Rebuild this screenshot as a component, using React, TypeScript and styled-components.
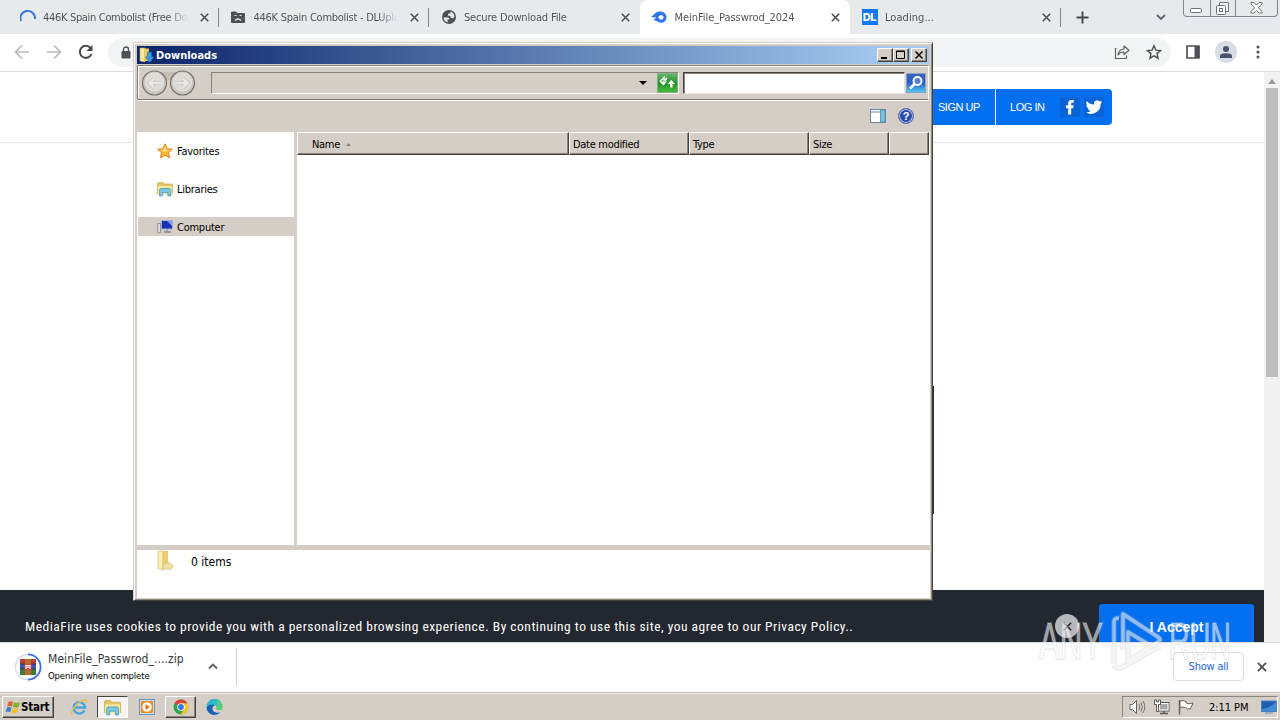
import React from "react";
import styled, { createGlobalStyle, css } from "styled-components";

const GlobalStyle = createGlobalStyle`
  * { box-sizing: border-box; }
  body { margin: 0; background: #fff; overflow: hidden; }
  svg { display: block; flex: none; }
`;

function Spinner() {
  return (
    <svg width="16" height="16" viewBox="0 0 16 16">
      <path d="M1 12A7.3 7.3 0 1 1 15 10" fill="none" stroke="#2f74d8" strokeWidth="1.9" />
    </svg>
  );
}

function SadFolder() {
  return (
    <svg width="16" height="16" viewBox="0 0 16 16">
      <path d="M1 3.5Q1 2.5 2 2.5H6L7.5 4H14Q15 4 15 5V13Q15 14 14 14H2Q1 14 1 13Z" fill="#4d5156" />
      <path d="M4.500 6.500h2M9.500 6.500h2M5 11.500Q8 8.500 11 11.500" fill="none" stroke="#e7eaed" strokeWidth="1.200" />
    </svg>
  );
}

function Globe() {
  return (
    <svg width="16" height="16" viewBox="0 0 16 16">
      <circle cx="8" cy="8" r="7" fill="#4d5156" />
      <path d="M2.500 8.500H6.500Q8.500 8.700 8.500 10.500H6.500V12.500L7.500 13.500Q3 13 2.500 8.500Z" fill="#e7eaed" />
      <path d="M9.500 2.500Q13 3.800 13.500 7.500L12 9.500 9.500 8.500V7L7 6.500V4.700L9.500 4.200Z" fill="#e7eaed" />
    </svg>
  );
}

function Flame() {
  return (
    <svg width="18" height="16" viewBox="0 0 18 16">
      <path d="M1 7.500C3.500 7.500 4.500 2.500 10 2.500C14 2.500 16.500 5 16.500 8.200C16.500 11.500 14 13.700 11 13.700C8 13.700 6.500 11.500 4.500 11.300L2.800 11.300C4.300 10.600 5.600 9.600 6 8Q3.800 9 1 7.500Z" fill="#2f74e8" />
      <path d="M8.200 8.300Q9.500 5.800 11.500 6Q13.800 6.500 13.600 8.500Q13.200 10.800 11 10.800Q9.200 10.600 8.200 8.300Z" fill="#fff" />
    </svg>
  );
}

function Cross({ size = 9, color = "#4c5054", width = 1.6 }: { size?: number; color?: string; width?: number }) {
  return (
    <svg width={size} height={size} viewBox="0 0 9 9">
      <path d="M.8.8 8.200 8.200M8.200.8.8 8.200" stroke={color} strokeWidth={width} />
    </svg>
  );
}

function LibraryFolder({ size = 16 }: { size?: number }) {
  return (
    <svg width={size} height={size} viewBox="0 0 16 16">
      <path d="M.5 3Q.5 1.500 2 1.500H6L7.500 3H14.500Q15.500 3 15.500 4V13H.5Z" fill="#e3c565" stroke="#c9a94b" strokeWidth=".7" />
      <path d="M1 5H15V13.500H1Z" fill="#f8e9a0" />
      <path d="M2.500 9Q2.500 7.500 4 7.500H12Q13.700 7.500 13.700 9V15H10.800V11.500H5.300V15H2.500Z" fill="#7cc8e4" stroke="#3f95bf" strokeWidth=".7" />
    </svg>
  );
}

function DlBadge() {
  return <DlIcon>DL</DlIcon>;
}

const tabs = [
  { title: "446K Spain Combolist (Free Download)", icon: <Spinner />, spacing: -0.32 },
  { title: "446K Spain Combolist - DLUpload", icon: <SadFolder />, spacing: -0.26 },
  { title: "Secure Download File", icon: <Globe />, spacing: -0.16 },
  { title: "MeinFile_Passwrod_2024", icon: <Flame />, active: true, spacing: -0.06 },
  { title: "Loading...", icon: <DlBadge />, spacing: 0.05 },
];

function App() {
  return (
    <Screen>
      <GlobalStyle />
      <TabStrip>
        {tabs.map((tab, i) => (
          <Tab key={i} $active={tab.active} $divider={i !== 2 && i !== 3}>
            <TabIcon>{tab.icon}</TabIcon>
            <TabTitle $spacing={tab.spacing}>{tab.title}</TabTitle>
            <Cross />
          </Tab>
        ))}
        <NewTab>
          <svg width="13" height="13" viewBox="0 0 13 13">
            <path d="M6.500.5V12.500M.5 6.500H12.500" stroke="#44484c" strokeWidth="1.900" />
          </svg>
        </NewTab>
        <svg width="10" height="7" viewBox="0 0 10 7">
          <path d="M1 1 5 5 9 1" fill="none" stroke="#5f6368" strokeWidth="1.800" />
        </svg>
        <Caption>
          <CaptionButton $width={26}>
            <svg width="13" height="6" viewBox="0 0 13 6">
              <rect x=".5" y=".5" width="11" height="4" rx="1" fill="#fff" stroke="#6d7278" />
            </svg>
          </CaptionButton>
          <CaptionButton $width={25}>
            <svg width="13" height="13" viewBox="0 0 13 13">
              <path d="M3.500 3V.5H12.500V9.500H10" fill="#f5f6f7" stroke="#6d7278" />
              <rect x=".5" y="3.500" width="9" height="9" rx="1" fill="#fff" stroke="#6d7278" />
              <rect x="3.500" y="6.500" width="3" height="3" fill="#fff" stroke="#6d7278" />
            </svg>
          </CaptionButton>
          <CaptionButton $width={42}>
            <svg width="13" height="12" viewBox="0 0 13 12">
              <path d="M1 .5H4L6.500 3 9 .5H12V2L8.500 5.800 12 9.500V11H9L6.500 8.500 4 11H1V9.500L4.500 5.800 1 2Z" fill="#fff" stroke="#6d7278" />
            </svg>
          </CaptionButton>
        </Caption>
      </TabStrip>

      <Toolbar>
        <svg width="16" height="16" viewBox="0 0 16 16">
          <path d="M15 8H2M8 1.500 1.500 8 8 14.500" fill="none" stroke="#b8babd" strokeWidth="1.700" />
        </svg>
        <svg width="16" height="16" viewBox="0 0 16 16">
          <path d="M1 8H14M8 1.500 14.500 8 8 14.500" fill="none" stroke="#b8babd" strokeWidth="1.700" />
        </svg>
        <svg width="16" height="16" viewBox="0 0 16 16">
          <path d="M13.500 10A6 6 0 1 1 12.500 4" fill="none" stroke="#46494d" strokeWidth="2" />
          <path d="M14.500 1V7H8.500Z" fill="#46494d" />
        </svg>
        <Omnibox>
          <svg width="10" height="13" viewBox="0 0 10 13">
            <path d="M2.500 6V3.500A2.500 2.500 0 0 1 7.500 3.500V6" fill="none" stroke="#4d5156" strokeWidth="1.400" />
            <rect x=".5" y="5" width="9" height="7.500" rx="1" fill="#4d5156" />
          </svg>
          <OmniboxActions>
            <svg width="16" height="16" viewBox="0 0 16 16">
              <path d="M2.500 4.500H1.500V14.500H12.500V11.500" fill="none" stroke="#5f6368" strokeWidth="1.200" />
              <path d="M4 11Q4.500 5.500 10 5V2L15 6.300 10 10.500V8Q6 7.800 4 11Z" fill="none" stroke="#5f6368" strokeWidth="1.200" strokeLinejoin="round" />
            </svg>
            <svg width="16" height="16" viewBox="0 0 16 16">
              <path d="M8 1.700 9.900 6.100 14.600 6.500 11 9.600 12.100 14.200 8 11.800 3.900 14.200 5 9.600 1.400 6.500 6.100 6.100Z" fill="none" stroke="#4d5156" strokeWidth="1.400" />
            </svg>
          </OmniboxActions>
        </Omnibox>
        <ToolbarActions>
          <svg width="14" height="14" viewBox="0 0 14 14">
            <path d="M1 1H13V13H1Z" fill="none" stroke="#4d5156" strokeWidth="1.700" />
            <path d="M8.500 1H13V13H8.500Z" fill="#4d5156" />
          </svg>
          <Avatar>
            <svg width="14" height="14" viewBox="0 0 14 14">
              <circle cx="7" cy="4" r="3" fill="#48536b" />
              <path d="M1 13V11Q1 8.300 7 8.300T13 11V13Z" fill="#48536b" />
            </svg>
          </Avatar>
          <svg width="4" height="14" viewBox="0 0 4 14">
            <circle cx="2" cy="2" r="1.500" fill="#4d5156" />
            <circle cx="2" cy="7" r="1.500" fill="#4d5156" />
            <circle cx="2" cy="12" r="1.500" fill="#4d5156" />
          </svg>
        </ToolbarActions>
      </Toolbar>

      <Viewport>
        <Page>
          <SiteHeader>
            <AccountBar>
              <SignUp>SIGN UP</SignUp>
              <LogIn>
                <span>LOG IN</span>
                <Social>
                  <svg width="20" height="20" viewBox="0 0 20 20">
                    <path d="M8.200 17.500V11.300H6V8.300H8.200V6.300Q8.200 3 11.500 3H13.700V5.800H12.300Q11.200 5.800 11.200 7V8.300H13.700L13.200 11.300H11.200V17.500Z" fill="#fff" />
                  </svg>
                </Social>
                <Social>
                  <svg width="20" height="20" viewBox="0 0 24 24">
                    <path d="M22 5.900c-.7.300-1.500.6-2.400.7.900-.5 1.500-1.300 1.800-2.300-.8.500-1.700.8-2.600 1a4.100 4.100 0 0 0-7 3.700A11.600 11.600 0 0 1 3.400 4.700a4.100 4.100 0 0 0 1.300 5.500c-.7 0-1.300-.2-1.900-.5a4.100 4.100 0 0 0 3.300 4.100c-.6.200-1.200.2-1.800.1a4.100 4.100 0 0 0 3.800 2.800A8.200 8.200 0 0 1 2 18.400 11.600 11.600 0 0 0 19.900 8c.8-.6 1.500-1.300 2.100-2.100Z" fill="#fff" />
                  </svg>
                </Social>
              </LogIn>
            </AccountBar>
          </SiteHeader>
          <PageBody>
            <DownloadPanel />
          </PageBody>
          <CookieBanner>
            <CookieText>
              MediaFire uses cookies to provide you with a personalized browsing experience. By continuing to use this site, you agree to our Privacy Policy..
            </CookieText>
            <DismissCookie>
              <Cross size={9} color="#23272f" width={1.5} />
            </DismissCookie>
            <Accept>I Accept</Accept>
          </CookieBanner>
        </Page>
        <Scrollbar>
          <svg width="8" height="5" viewBox="0 0 8 5">
            <path d="M0 5 4 0 8 5Z" fill="#9c9c9c" />
          </svg>
          <Thumb />
        </Scrollbar>
      </Viewport>

      <DownloadShelf>
        <DownloadItem>
          <svg width="28" height="28" viewBox="0 0 28 28">
            <circle cx="14" cy="14" r="12.600" fill="none" stroke="#d5dcf0" strokeWidth="1.500" />
            <path d="M14 1.400A12.600 12.600 0 0 1 14 26.600" fill="none" stroke="#3f6fe0" strokeWidth="1.800" />
            <rect x="6" y="6" width="16" height="5" fill="#b8403c" />
            <rect x="6" y="11" width="16" height="5" fill="#3b55a8" />
            <rect x="6" y="16" width="16" height="6" fill="#3c7d3c" />
            <path d="M6 11H22M6 16H22" stroke="#302c3a" strokeWidth=".8" />
            <rect x="11" y="6" width="6" height="16" fill="#b86a28" />
            <rect x="10.500" y="11" width="7" height="6" fill="#d8453a" />
            <path d="M12 16V12.500H16V16M14 12.500V15" fill="none" stroke="#fff" strokeWidth="1.200" />
          </svg>
          <DownloadText>
            <FileName>MeinFile_Passwrod_....zip</FileName>
            <FileStatus>Opening when complete</FileStatus>
          </DownloadText>
          <svg width="10" height="7" viewBox="0 0 10 7">
            <path d="M1 5.500 5 1.500 9 5.500" fill="none" stroke="#5f6368" strokeWidth="1.800" />
          </svg>
        </DownloadItem>
        <ShelfActions>
          <ShowAll>Show all</ShowAll>
          <Cross size={10} />
        </ShelfActions>
      </DownloadShelf>

      <Taskbar>
        <StartButton>
          <svg width="16" height="15" viewBox="0 0 16 15">
            <path d="M3.500 2Q6 .5 8 2L6.800 6.500Q4.500 5.300 2.200 6.500Z" fill="#e8602c" />
            <path d="M9 2.300Q12 3.800 15 2.300L13.700 7Q10.800 8.200 7.800 6.800Z" fill="#79b530" />
            <path d="M2 7.500Q4.500 6.300 6.500 7.500L5.300 12Q3 10.800.7 12Z" fill="#3b7fd4" />
            <path d="M7.500 7.900Q10.500 9.300 13.400 8L12.100 12.700Q9 14 6.200 12.500Z" fill="#f3be2c" />
          </svg>
          Start
        </StartButton>
        <TaskButtons>
          <TaskButton>
            <svg width="18" height="18" viewBox="0 0 18 18">
              <path d="M14.500 12.200A5.700 5.700 0 1 1 15 9.500H5" fill="none" stroke="#48a7e0" strokeWidth="2.400" />
              <path d="M3.500 15.800Q-.5 16.500 3.500 10.500Q8.500 3.500 14 1.800Q17.500 1.300 16 5" fill="none" stroke="#e8bd48" strokeWidth="1.300" />
            </svg>
          </TaskButton>
          <TaskButton $state="pressed">
            <LibraryFolder size={17} />
          </TaskButton>
          <TaskButton>
            <svg width="16" height="16" viewBox="0 0 16 16">
              <rect x=".5" y=".5" width="15" height="15" fill="#c7dcec" stroke="#6e98bc" />
              <rect x="2" y="2" width="12" height="12" rx="1" fill="#f08a1c" />
              <circle cx="8" cy="8" r="4.800" fill="#fff" />
              <path d="M6.500 5 11 8 6.500 11Z" fill="#e9730b" />
            </svg>
          </TaskButton>
          <TaskButton $state="raised">
            <svg width="16" height="16" viewBox="0 0 16 16">
              <circle cx="8" cy="8" r="7.500" fill="#2da44e" />
              <path d="M8 8 1.500 4.200A7.500 7.500 0 0 1 14.500 4.250Z" fill="#dd4437" />
              <path d="M8 4.250H14.500A7.500 7.500 0 0 1 7.500 15.500L11.200 9.800Z" fill="#f7c928" />
              <circle cx="8" cy="8" r="3.800" fill="#fff" />
              <circle cx="8" cy="8" r="2.900" fill="#3b78e7" />
            </svg>
          </TaskButton>
          <TaskButton>
            <svg width="17" height="17" viewBox="0 0 17 17">
              <path d="M.5 8A8 8 0 0 1 16.500 7.500Q16.500 11 12.500 11Q10 11 10.500 9.500Q11.300 7.500 8.800 6.300Q4 4.500.5 8Z" fill="#2fb8c8" />
              <path d="M10 1Q16.500 3 16.500 7.500Q16.500 11 12.500 11Q10 11 10.500 9.500Q12 5 10 1Z" fill="#54cf78" />
              <path d="M.5 8Q4 4.300 8.800 6.300Q5.500 8 6.700 11.300Q8.500 14.800 14.500 13.200A8 8 0 0 1 .5 8Z" fill="#1a62b5" />
            </svg>
          </TaskButton>
        </TaskButtons>
        <Tray>
          <svg width="17" height="16" viewBox="0 0 17 16">
            <path d="M1 5.500H3.500L7.500 1.500V14.500L3.500 10.500H1Z" fill="#fff" stroke="#66625c" />
            <path d="M10 5Q11.500 8 10 11M12 3.500Q14.500 8 12 12.500M14 2Q17.500 8 14 14" fill="none" stroke="#77736d" />
          </svg>
          <svg width="16" height="16" viewBox="0 0 16 16">
            <rect x="4.500" y="3.500" width="10.500" height="8.500" fill="#aaa8a4" stroke="#5c5954" />
            <rect x="5.500" y="4.500" width="8.500" height="6.500" fill="none" stroke="#fff" />
            <path d="M6 14.500H14M10 12V14" stroke="#5c5954" strokeWidth="1.500" />
            <path d="M.5 1V5.500H2.500V12.500H4.500V5.500H6.500V1H4.500V3H2.500V1Z" fill="#fff" stroke="#5c5954" />
          </svg>
          <svg width="16" height="16" viewBox="0 0 16 16">
            <path d="M1.500 1V15.500" stroke="#66625c" strokeWidth="1.500" />
            <path d="M2 2Q5 1 8 2.500V4Q11 5.500 15 4Q14 7 12 10Q9 10.500 7.500 8.500Q5 7.500 2 8.500Z" fill="#fff" stroke="#66625c" />
          </svg>
          <Clock>2:11 PM</Clock>
          <svg width="16" height="14" viewBox="0 0 16 14">
            <rect x=".5" y="1" width="15" height="10.500" fill="#1d5fae" stroke="#4c80b8" />
            <path d="M1 9Q8 8.500 15 2V11H1Z" fill="#3f8bd2" />
            <path d="M4 13H12" stroke="#8aa3b8" strokeWidth="1.500" />
          </svg>
        </Tray>
      </Taskbar>

      <Explorer>
        <TitleBar>
          <svg width="16" height="16" viewBox="0 0 16 16">
            <path d="M2 1H7V15L2 14Z" fill="#f9e9a0" stroke="#cfae52" strokeWidth=".6" />
            <path d="M6 1.500H11V14H6Z" fill="#ecc95c" />
            <path d="M9.500 5H13.500V10H16L11.500 15.500 7.500 10H9.500Z" fill="#369fe8" stroke="#1767b0" strokeWidth=".6" />
          </svg>
          <WindowTitle>Downloads</WindowTitle>
          <ClassicButton>
            <svg width="8" height="8" viewBox="0 0 8 8"><path d="M0 7H6" stroke="#000" strokeWidth="2" /></svg>
          </ClassicButton>
          <ClassicButton>
            <svg width="9" height="9" viewBox="0 0 9 9"><path d="M.5 1H8.500V8.500H.5ZM0 1.500H9" fill="none" stroke="#000" /></svg>
          </ClassicButton>
          <ClassicButton $gap>
            <svg width="8" height="8" viewBox="0 0 8 8"><path d="M.5.5 7.500 7.500M7.500.5.5 7.500" stroke="#000" strokeWidth="1.500" /></svg>
          </ClassicButton>
        </TitleBar>
        <NavBar>
          <svg width="56" height="26" viewBox="0 0 56 26">
            <path d="M12 2H43V10H12Z" fill="#c3beb6" />
            {[13.5, 41.5].map((cx) => (
              <g key={cx}>
                <circle cx={cx} cy="13" r="12" fill="#c8c5bf" stroke="#77746f" strokeWidth="1.200" />
                <circle cx={cx} cy="12" r="9.800" fill="#dedcd8" />
              </g>
            ))}
            <path d="M20 13H9M13 8.500 8.500 13 13 17.500M35 13H46M42 8.500 46.500 13 42 17.500" fill="none" stroke="#c6c4c0" strokeWidth="4" />
            <path d="M20 13H9M13 8.500 8.500 13 13 17.500M35 13H46M42 8.500 46.500 13 42 17.500" fill="none" stroke="#e9e8e5" strokeWidth="2.500" />
          </svg>
          <AddressBar>
            <svg width="8" height="4" viewBox="0 0 8 4"><path d="M0 0H8L4 4Z" fill="#000" /></svg>
            <Refresh>
              <svg width="17" height="15" viewBox="0 0 17 15">
                <path d="M1 6.500 5 2.500V5H6.500Q7.500 4.500 7.500 2.500" fill="none" stroke="#fff" strokeWidth="1.500" />
                <path d="M.5 6.500H8L4.300 10.500Z" fill="#fff" />
                <path d="M8.500 9 12.300 5 16 9H13.500V12.500H11V9Z" fill="#fff" />
              </svg>
            </Refresh>
          </AddressBar>
          <SearchBox />
          <SearchButton>
            <svg width="16" height="16" viewBox="0 0 16 16">
              <circle cx="9.500" cy="6" r="4" fill="#4f83d8" stroke="#fff" strokeWidth="2" />
              <path d="M6.500 9 2 13.500" stroke="#fff" strokeWidth="2.500" />
            </svg>
          </SearchButton>
        </NavBar>
        <CommandBar>
          <svg width="16" height="14" viewBox="0 0 16 14">
            <rect x=".5" y=".5" width="15" height="13" fill="#fff" stroke="#668aa8" />
            <path d="M1 3H10" stroke="#668aa8" />
            <rect x="10.500" y="1" width="4.500" height="12" fill="#79c3e0" stroke="#4f8cab" strokeWidth=".8" />
          </svg>
          <Help>?</Help>
        </CommandBar>
        <Panes>
          <Sidebar>
            <NavItem>
              <svg width="16" height="16" viewBox="0 0 16 16">
                <path d="M8 .8 10.200 5.700 15.500 6.200 11.500 9.700 12.700 15 8 12.200 3.300 15 4.500 9.700.5 6.200 5.800 5.700Z" fill="#fbb836" stroke="#dc7f23" strokeWidth=".9" />
                <path d="M8 3 9.300 6.700 12.500 7 8 9 3.500 7 6.700 6.700Z" fill="#fde08a" />
              </svg>
              <span>Favorites</span>
            </NavItem>
            <NavItem>
              <LibraryFolder />
              <span>Libraries</span>
            </NavItem>
            <NavItem $selected>
              <svg width="16" height="16" viewBox="0 0 16 16">
                <rect x=".8" y="4.500" width="2.700" height="9" fill="#dedede" stroke="#888" strokeWidth=".8" />
                <rect x="4.500" y="1.500" width="11" height="8.500" fill="#1731b8" stroke="#a6b2c8" />
                <path d="M10 2H15V7Z" fill="#7f9eea" />
                <path d="M7 13H14M10 10.500V12.500" stroke="#8f9aa8" strokeWidth="1.800" />
              </svg>
              <span>Computer</span>
            </NavItem>
          </Sidebar>
          <FileList>
            <ColumnRow>
              <Column $width={272} $first>
                Name
                <svg width="5" height="3" viewBox="0 0 5 3"><path d="M0 3 2.500 0 5 3Z" fill="#8b867d" /></svg>
              </Column>
              <Column $width={120}>Date modified</Column>
              <Column $width={120}>Type</Column>
              <Column $width={80}>Size</Column>
              <Column $width={40} />
            </ColumnRow>
          </FileList>
        </Panes>
        <Details>
          <svg width="18" height="21" viewBox="0 -1 18 21">
            <path d="M2 0H7V19L2 17.500Z" fill="#fbeeb2" stroke="#dcc475" strokeWidth=".7" />
            <path d="M6.500 0H12V14L6.500 19Z" fill="#e8cc70" />
            <path d="M12 11Q16 12.500 17.500 15.500L14 19Q12 17 7 18.500V14Z" fill="#efdf9f" stroke="#ccb978" strokeWidth=".6" />
          </svg>
          <ItemCount>0 items</ItemCount>
        </Details>
      </Explorer>

      <Watermark width="200" height="66" viewBox="0 0 200 66">
        <Letters $under>
          <text x="3" y="51" fontSize="52" textLength="64" lengthAdjust="spacingAndGlyphs">ANY</text>
          <text x="133" y="51" fontSize="52" textLength="62" lengthAdjust="spacingAndGlyphs">RUN</text>
        </Letters>
        <Play $under d="M83 10Q78 10 78 14V56M87 42V6L122 29Q126 32 122 34L92 53V24L112 36M78 57Q80 61 85 60L124 38" />
        <Play d="M83 10Q78 10 78 14V56M87 42V6L122 29Q126 32 122 34L92 53V24L112 36M78 57Q80 61 85 60L124 38" />
      </Watermark>
    </Screen>
  );
}

export default App;

const ui = `"DejaVu Sans Condensed", "DejaVu Sans", sans-serif`;
const face = "#d5cec6";

const raised = css`
  border: 1px solid;
  border-color: #fff #45423e #45423e #fff;
  box-shadow: inset -1px -1px #88837b;
`;

const Screen = styled.div`
  position: relative;
  display: flex;
  flex-direction: column;
  width: 1280px;
  height: 720px;
  overflow: hidden;
  font-family: ${ui};
  font-stretch: condensed;
  font-size: 11px;
  color: #000;
  white-space: nowrap;
`;

const TabStrip = styled.div`
  display: flex;
  align-items: center;
  height: 34px;
  padding-left: 8px;
  background: #e7eaed;
`;

const Tab = styled.div<{ $active?: boolean; $divider?: boolean }>`
  display: flex;
  align-items: center;
  gap: 7px;
  width: 210.5px;
  height: 34px;
  padding: 0 10px 0 11px;
  flex: none;
  color: #505458;
  border-radius: 8px 8px 0 0;
  background: ${(p) => (p.$active ? "#fff" : "transparent")};
  ${(p) =>
    p.$divider &&
    css`
      background: linear-gradient(#85898d, #85898d) right center / 1px 19px no-repeat;
    `}
`;

const TabIcon = styled.div`
  display: flex;
  justify-content: center;
  width: 17px;
  flex: none;
`;

const TabTitle = styled.div<{ $spacing: number }>`
  flex: 1;
  overflow: hidden;
  letter-spacing: ${(p) => p.$spacing}px;
  margin-right: 5px;
  mask-image: linear-gradient(to right, #000 86%, transparent);
`;

const DlIcon = styled.div`
  width: 16px;
  height: 16px;
  background: #1478f0;
  color: #fff;
  font: 800 11px/16px "Inter", sans-serif;
  letter-spacing: -0.3px;
  text-align: center;
`;

const NewTab = styled.div`
  padding: 0 67px 0 15px;
`;

const Caption = styled.div`
  display: flex;
  align-self: flex-start;
  height: 17px;
  margin-left: 17px;
  border: 1px solid #84888d;
  border-top: 0;
  border-radius: 0 0 4px 4px;
`;

const CaptionButton = styled.div<{ $width: number }>`
  display: flex;
  align-items: center;
  justify-content: center;
  width: ${(p) => p.$width}px;
  & + & {
    border-left: 1px solid #84888d;
  }
  &:first-child {
    padding-top: 5px;
  }
`;

const Toolbar = styled.div`
  display: flex;
  align-items: center;
  gap: 16px;
  height: 38px;
  padding: 0 0 1px 14px;
  border-bottom: 1px solid #dbdcde;
  background: #fff;
`;

const Omnibox = styled.div`
  display: flex;
  align-items: center;
  justify-content: space-between;
  width: 1063px;
  height: 29px;
  margin-left: -2px;
  padding: 0 9px 0 13px;
  border-radius: 15px;
  background: #f1f3f4;
`;

const OmniboxActions = styled.div`
  display: flex;
  gap: 16px;
`;

const ToolbarActions = styled.div`
  display: flex;
  align-items: center;
  gap: 15px;
  flex: 1;
  margin-left: -1px;
  & > :last-child {
    margin-left: 4px;
  }
`;

const Avatar = styled.div`
  display: flex;
  align-items: center;
  justify-content: center;
  width: 22px;
  height: 22px;
  border-radius: 50%;
  background: #d7dce5;
`;

const Viewport = styled.div`
  display: flex;
  height: 570px;
`;

const Page = styled.div`
  display: flex;
  flex-direction: column;
  width: 1264px;
  background: #fff;
`;

const SiteHeader = styled.div`
  display: flex;
  justify-content: flex-end;
  height: 71px;
  padding: 17px 152px 0 0;
  border-bottom: 1px solid #e3e5e8;
`;

const AccountBar = styled.div`
  display: flex;
  height: 36px;
  overflow: hidden;
  border-radius: 4px;
  background: #0570ef;
  color: #fff;
  font-family: "Liberation Sans", sans-serif;
  letter-spacing: -0.45px;
`;

const SignUp = styled.div`
  display: flex;
  align-items: center;
  padding: 0 15px;
  border-right: 1px solid #fff;
`;

const LogIn = styled.div`
  display: flex;
  align-items: center;
  gap: 4px;
  padding: 0 8px 0 14px;
  span {
    width: 46px;
  }
`;

const Social = styled.div`
  width: 20px;
  height: 20px;
  border-radius: 2px;
  background: #0863d5;
`;

const PageBody = styled.div`
  flex: 1;
  display: flex;
  justify-content: center;
  padding-top: 243px;
`;

const DownloadPanel = styled.div`
  width: 604px;
  height: 128px;
  background: #24282f;
`;

const CookieBanner = styled.div`
  display: flex;
  height: 52px;
  padding-left: 25px;
  overflow: hidden;
  background: #23272f;
  color: #fff;
  font-family: Roboto, sans-serif;
`;

const CookieText = styled.div`
  width: 1030px;
  padding-top: 29px;
  font-size: 13.5px;
  line-height: 15px;
  letter-spacing: 0.49px;
`;

const DismissCookie = styled.div`
  display: flex;
  align-items: center;
  justify-content: center;
  width: 24px;
  height: 24px;
  margin: 24px 20px 0 0;
  border-radius: 50%;
  background: #b5b7ba;
`;

const Accept = styled.div`
  width: 155px;
  height: 47px;
  margin-top: 14px;
  border-radius: 3px;
  background: #0570ef;
  font: bold 14px/46px "Liberation Sans", sans-serif;
  text-align: center;
`;

const Scrollbar = styled.div`
  display: flex;
  flex-direction: column;
  align-items: center;
  gap: 4px;
  width: 16px;
  padding-top: 7px;
  background: #f1f1f1;
`;

const Thumb = styled.div`
  width: 12px;
  height: 289px;
  background: #bdbdbd;
`;

const DownloadShelf = styled.div`
  display: flex;
  align-items: center;
  justify-content: space-between;
  height: 50px;
  padding: 0 13px 2px 0;
  border-top: 1px solid #dcdcdc;
  background: #fff;
`;

const DownloadItem = styled.div`
  display: flex;
  align-items: center;
  width: 237px;
  height: 38px;
  padding-left: 14px;
  border-right: 1px solid #d4d4d4;
`;

const DownloadText = styled.div`
  width: 160px;
  margin-left: 6px;
`;

const FileName = styled.div`
  font-size: 12px;
  line-height: 16px;
  color: #35383b;
  letter-spacing: 0.06px;
`;

const FileStatus = styled.div`
  margin-top: 2px;
  font-size: 9.5px;
  line-height: 14px;
  letter-spacing: -0.14px;
`;

const ShelfActions = styled.div`
  display: flex;
  align-items: center;
  gap: 13px;
`;

const ShowAll = styled.div`
  width: 71px;
  height: 29px;
  border: 1px solid #d9dbdf;
  border-radius: 4px;
  line-height: 27px;
  letter-spacing: -0.2px;
  text-align: center;
  color: #2467cf;
`;

const Taskbar = styled.div`
  display: flex;
  align-items: center;
  height: 28px;
  padding: 1px 2px 0;
  border-top: 1px solid #bdb9b3;
  background: ${face};
  box-shadow: inset 0 1px #f7f5f3;
`;

const StartButton = styled.div`
  display: flex;
  align-items: center;
  gap: 0;
  width: 52px;
  height: 22px;
  padding-left: 2px;
  ${raised}
  font-size: 11.5px;
  font-weight: bold;
  letter-spacing: -0.25px;
`;

const TaskButtons = styled.div`
  display: flex;
  flex: 1;
  gap: 3px;
  margin-left: 9px;
`;

const TaskButton = styled.div<{ $state?: "pressed" | "raised" }>`
  display: flex;
  align-items: center;
  justify-content: center;
  width: 31px;
  height: 22px;
  ${(p) => p.$state === "raised" && raised}
  ${(p) =>
    p.$state === "pressed" &&
    css`
      border: 1px solid;
      border-color: #45423e #fff #fff #45423e;
      background: #f6f4f2;
    `}
`;

const Tray = styled.div`
  display: flex;
  align-items: center;
  gap: 8px;
  width: 156px;
  height: 22px;
  padding-left: 6px;
  border: 1px solid;
  border-color: #8a857d #fff #fff #8a857d;
`;

const Clock = styled.div`
  width: 43px;
  margin: 0 2px 0 7px;
  letter-spacing: -0.05px;
`;

// floats above the browser
const Explorer = styled.div`
  position: absolute;
  left: 133px;
  top: 42px;
  display: flex;
  flex-direction: column;
  width: 800px;
  height: 559px;
  padding: 2px 2px 1px 3px;
  border: 1px solid;
  border-color: ${face} #45423e #45423e ${face};
  box-shadow: inset 1px 1px #fff, inset -1px -1px #8e8981;
  background: ${face};
`;

const TitleBar = styled.div`
  display: flex;
  align-items: center;
  height: 18px;
  margin: 1px 1px 1px 0;
  padding: 0 2px 0 1px;
  background: linear-gradient(to right, #0b246a, #a6caf0 96%);
`;

const WindowTitle = styled.div`
  flex: 1;
  margin-left: 2px;
  color: #fff;
  font-weight: bold;
  letter-spacing: 0;
`;

const ClassicButton = styled.div<{ $gap?: boolean }>`
  display: flex;
  align-items: center;
  justify-content: center;
  width: 16px;
  height: 14px;
  margin-left: ${(p) => (p.$gap ? 2 : 0)}px;
  padding: 0 1px 1px 0;
  ${raised}
  background: ${face};
`;

const NavBar = styled.div`
  display: flex;
  align-items: center;
  height: 35px;
  margin-right: 1px;
  border: 1px solid;
  border-color: #7f7a73 #fff #7f7a73 #7f7a73;
  box-shadow: inset 1px 1px #fff, 0 1px #fff;
  padding: 0 0 0 3px;
`;

const AddressBar = styled.div`
  display: flex;
  align-items: center;
  justify-content: flex-end;
  gap: 10px;
  width: 468px;
  height: 22px;
  margin-left: 14px;
  border: 1px solid;
  border-color: #88837b #fff #fff #88837b;
`;

const Refresh = styled.div`
  display: flex;
  align-items: center;
  justify-content: center;
  width: 21px;
  height: 20px;
  border: 1px solid #7db384;
  background: linear-gradient(#67b36d, #229329 50%, #46bb35);
`;

const SearchBox = styled.div`
  width: 222px;
  height: 22px;
  margin-left: 4px;
  border: 1px solid;
  border-color: #45423e #e8e4df #e8e4df #45423e;
  box-shadow: inset 1px 1px #88837b;
  background: #fff;
`;

const SearchButton = styled.div`
  display: flex;
  align-items: center;
  justify-content: center;
  width: 20px;
  height: 20px;
  margin-left: 1px;
  border: 1px solid #8ba5cb;
  background: linear-gradient(#3c62bd, #2b5fc7 50%, #52c8ee);
`;

const CommandBar = styled.div`
  display: flex;
  align-items: center;
  justify-content: flex-end;
  gap: 12px;
  height: 32px;
  padding-right: 16px;
`;

const Help = styled.div`
  width: 16px;
  height: 16px;
  border: 1px solid #5a6cac;
  border-radius: 50%;
  background: #2a4caa;
  box-shadow: inset 0 0 0 1px #b8c4e4;
  color: #fff;
  font: bold 11px/14px "Liberation Sans", sans-serif;
  text-align: center;
`;

const Panes = styled.div`
  display: flex;
  height: 413px;
`;

const Sidebar = styled.div`
  display: flex;
  flex-direction: column;
  gap: 19px;
  width: 157px;
  padding-top: 9px;
  background: #fff;
`;

const NavItem = styled.div<{ $selected?: boolean }>`
  display: flex;
  align-items: center;
  gap: 4px;
  height: 19px;
  margin-left: 1px;
  padding-left: 19px;
  letter-spacing: -0.25px;
  background: ${(p) => (p.$selected ? face : "transparent")};
  span {
    padding-top: 2px;
  }
`;

const FileList = styled.div`
  flex: 1;
  margin-left: 3px;
  background: #fff;
`;

const ColumnRow = styled.div`
  display: flex;
  height: 23px;
`;

const Column = styled.div<{ $width: number; $first?: boolean }>`
  display: flex;
  align-items: center;
  gap: 6px;
  width: ${(p) => p.$width}px;
  padding: 2px 0 0 ${(p) => (p.$first ? 14 : 3)}px;
  ${raised}
  background: ${face};
  letter-spacing: -0.3px;
`;

const Details = styled.div`
  display: flex;
  height: 48px;
  margin-top: 5px;
  padding-left: 19px;
  background: #fff;
`;

const ItemCount = styled.div`
  margin: 4px 0 0 17px;
  font-size: 12px;
  line-height: 16px;
`;

// branding laid over the whole desktop
const Watermark = styled.svg`
  position: absolute;
  left: 1036px;
  top: 608px;
  font-family: "Liberation Sans", sans-serif;
`;

const Letters = styled.g<{ $under?: boolean }>`
  fill: rgba(255, 255, 255, 0.55);
  stroke: rgba(190, 194, 200, 0.35);
  stroke-width: 2.2px;
  paint-order: stroke;
`;

const Play = styled.path<{ $under?: boolean }>`
  fill: none;
  stroke: ${(p) => (p.$under ? "rgba(185, 190, 198, 0.3)" : "rgba(255, 255, 255, 0.45)")};
  stroke-width: ${(p) => (p.$under ? 5.5 : 3.5)}px;
  stroke-linejoin: round;
`;
